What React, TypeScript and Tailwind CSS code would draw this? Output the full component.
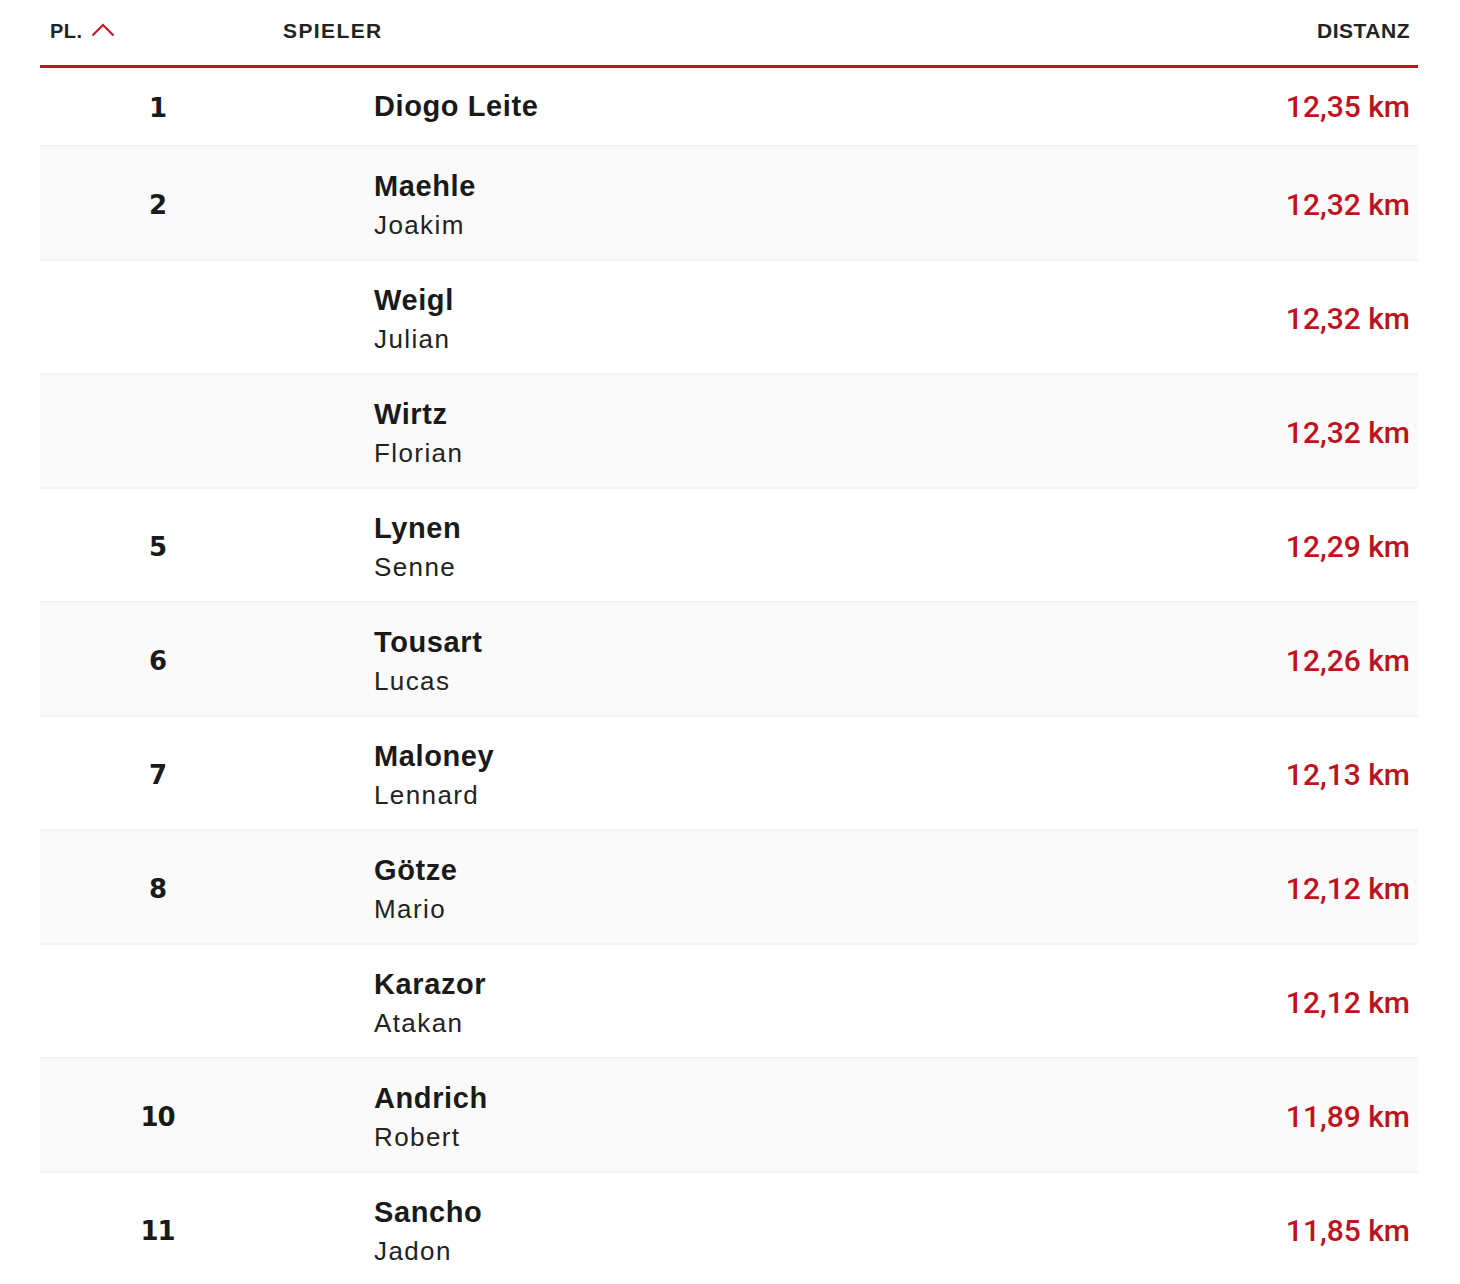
import React from "react";

type Row = { rank?: string; last: string; first?: string; dist: string };

const rows: Row[] = [
  { rank: "1", last: "Diogo Leite", dist: "12,35 km" },
  { rank: "2", last: "Maehle", first: "Joakim", dist: "12,32 km" },
  { last: "Weigl", first: "Julian", dist: "12,32 km" },
  { last: "Wirtz", first: "Florian", dist: "12,32 km" },
  { rank: "5", last: "Lynen", first: "Senne", dist: "12,29 km" },
  { rank: "6", last: "Tousart", first: "Lucas", dist: "12,26 km" },
  { rank: "7", last: "Maloney", first: "Lennard", dist: "12,13 km" },
  { rank: "8", last: "Götze", first: "Mario", dist: "12,12 km" },
  { last: "Karazor", first: "Atakan", dist: "12,12 km" },
  { rank: "10", last: "Andrich", first: "Robert", dist: "11,89 km" },
  { rank: "11", last: "Sancho", first: "Jadon", dist: "11,85 km" },
];

export default function App() {
  return (
    <div className="w-[1460px] h-[1284px] overflow-hidden bg-white pl-10 pr-[42px] text-[#1a1a1a] font-['Liberation_Sans',Arial,sans-serif]">
      <div className="grid grid-cols-[235px_1fr_auto] h-[68px] pb-[3px] items-center border-b-[3px] border-[#c4121a]">
        <div className="flex items-center pl-[10px] text-[20px] font-bold tracking-[0.5px] text-[#222]">
          <span>PL.</span>
          <svg width="24" height="14" viewBox="0 0 24 14" className="ml-[8px] -mt-[3px]">
            <path d="M1.5 12.5 L12 2 L22.5 12.5" fill="none" stroke="#c4121a" strokeWidth="2" />
          </svg>
        </div>
        <div className="pl-2 text-[21px] font-bold tracking-[1.4px] text-[#222]">SPIELER</div>
        <div className="pr-2 text-[21px] font-bold tracking-[0.5px] text-[#222]">DISTANZ</div>
      </div>
      {rows.map((r, i) => (
        <div
          key={i}
          className={`grid grid-cols-[235px_1fr_auto] items-center border-b-2 border-[#f2f2f2] ${
            i === 0 ? "h-[79px]" : "h-[114px]"
          } ${i % 2 === 1 ? "bg-[#fafafa]" : "bg-white"}`}
        >
          <div
            className={`text-center text-[26px] font-bold tracking-[-1px] font-['DejaVu_Sans',sans-serif] text-[#1a1a1a] ${
              i === 0 ? "pt-[3px]" : "pt-[5px]"
            }`}
          >
            {r.rank ?? ""}
          </div>
          <div className={`pl-[99px] ${i === 0 ? "" : "pt-[6px]"}`}>
            <div className="text-[29px] font-bold leading-[39px] tracking-[0.6px]">{r.last}</div>
            {r.first && (
              <div className="text-[26px] leading-[39px] tracking-[1.4px] text-[#222]">{r.first}</div>
            )}
          </div>
          <div
            className={`pr-2 text-[30px] font-medium font-['Roboto',sans-serif] text-[#bf1220] ${
              i === 0 ? "" : "pt-[3px]"
            }`}
          >
            {r.dist}
          </div>
        </div>
      ))}
    </div>
  );
}
